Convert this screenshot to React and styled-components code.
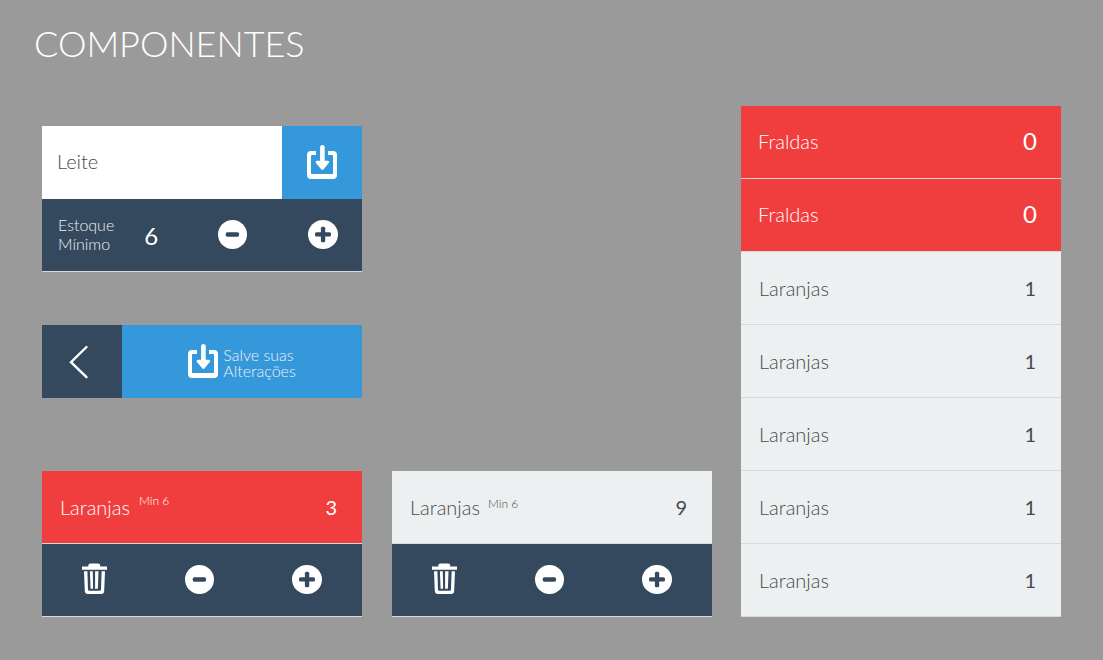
import React, { useState } from "react";
import styled, { createGlobalStyle } from "styled-components";

const color = {
  page: "#9a9a9a",
  navy: "#34495e",
  blue: "#3498db",
  red: "#f03e3e",
  cloud: "#ecf0f1",
  line: "#dcd8d8",
  ink: "#4a4a4a",
};

const GlobalStyle = createGlobalStyle`
  *, *::before, *::after { box-sizing: border-box; }
  body {
    margin: 0;
    background: ${color.page};
    color: ${color.ink};
    font-family: Lato, "Liberation Sans", sans-serif;
  }
`;

const Page = styled.main`
  padding: 21px 42px 43px;
`;

const Title = styled.h1`
  margin: 0 0 41px -8px;
  color: #fff;
  font-size: 36px;
  line-height: 44px;
  font-weight: 300;
`;

const Board = styled.div`
  display: grid;
  grid-template-columns: 67fr 32fr;
  column-gap: 29px;
  align-items: start;
`;

const Samples = styled.div`
  display: grid;
  grid-template-columns: 1fr 1fr;
  column-gap: 30px;
  padding-top: 20px;
`;

const Card = styled.section`
  grid-column: ${(p) => p.$column || 1};
  margin-bottom: ${(p) => p.$space || 0}px;
`;

const EditRow = styled.div`
  display: flex;
  height: 73px;
`;

const NameInput = styled.input`
  flex: 1;
  min-width: 0;
  border: 0;
  border-radius: 0;
  padding: 0 15px 4px;
  background: #fff;
  color: ${color.ink};
  font: 300 20px/24px Lato, "Liberation Sans", sans-serif;
`;

const BarButton = styled.button`
  display: flex;
  align-items: center;
  justify-content: center;
  gap: 5px;
  flex: 0 0 ${(p) => (p.$wide ? 75 : 25)}%;
  border: 0;
  padding: 0 0 2px;
  background: ${(p) => p.$fill};
  color: #fff;
  cursor: pointer;
  font: 300 16px/16px Lato, "Liberation Sans", sans-serif;
  text-align: left;
`;

const BackButton = styled(BarButton)`
  padding: 0 6px 0 0;
`;

const SaveText = styled.span`
  padding-top: 4px;
  color: ${color.cloud};
`;

const ControlRow = styled.div`
  display: flex;
  align-items: center;
  justify-content: space-between;
  height: 73px;
  padding: ${(p) => (p.$labelled ? "0 24px 2px 16px" : "0 40px 2px")};
  border-bottom: 1px solid ${color.line};
  background: ${color.navy};
`;

const MinLabel = styled.span`
  color: ${color.cloud};
  font-size: 16px;
  line-height: 19px;
  font-weight: 300;
`;

const MinValue = styled.output`
  margin: 4px 60px 0 30px;
  color: #fff;
  font-size: 24px;
  line-height: 28px;
`;

const Stepper = styled.div`
  display: flex;
  flex: 1;
  justify-content: space-between;
`;

const IconButton = styled.button`
  display: block;
  border: 0;
  padding: 0;
  background: none;
  color: #fff;
  cursor: pointer;
`;

const Icon = styled.svg`
  display: block;
  flex: none;
  fill: currentColor;
`;

const List = styled.ul`
  margin: 0;
  padding: 0;
  list-style: none;
`;

const ItemRow = styled.div`
  display: flex;
  align-items: center;
  height: 73px;
  padding: ${(p) => (p.$large ? "0 24px 2px 17px" : "0 25px 0 18px")};
  border-bottom: 1px solid ${color.line};
  background: ${(p) => (p.$alert ? color.red : color.cloud)};
  color: ${(p) => (p.$alert ? "#fff" : color.ink)};
`;

const ItemName = styled.span`
  font-size: 20px;
  line-height: 24px;
  font-weight: 300;
`;

const ItemMin = styled.span`
  align-self: flex-start;
  margin-left: ${(p) => (p.$alert ? 9 : 8)}px;
  padding-top: ${(p) => (p.$alert ? 22 : 25)}px;
  font-size: 12px;
  line-height: 16px;
  font-weight: 300;
`;

const Amount = styled.span`
  margin-left: auto;
  font-size: ${(p) => (p.$large ? 24 : 20)}px;
  line-height: 28px;
`;

function SaveIcon() {
  return (
    <Icon width="30" height="34" viewBox="0 0 30 34" aria-hidden="true">
      <path d="M4 6H9V10H5a1 1 0 0 0-1 1V28.5a.6.6 0 0 0 .6.6H25.4a.6.6 0 0 0 .6-.6V11a1 1 0 0 0-1-1H21V6H26a4 4 0 0 1 4 4V30a4 4 0 0 1-4 4H4a4 4 0 0 1-4-4V10a4 4 0 0 1 4-4Z" />
      <rect x="13.1" y="0" width="4.6" height="19" rx="2.3" />
      <path d="M10.1 15.7h10.6c1.4 0 1.9 1.4 1 2.4l-5.1 6.2c-.6.9-1.8.9-2.4 0L9 18.1c-.8-1-.3-2.4 1.1-2.4Z" />
    </Icon>
  );
}

function MinusIcon() {
  return (
    <Icon width="29" height="29" viewBox="0 0 29 29" aria-hidden="true">
      <circle cx="14.5" cy="14.5" r="14.5" />
      <rect x="7.7" y="12.3" width="13.4" height="4.5" rx="1.7" fill={color.navy} />
    </Icon>
  );
}

function PlusIcon() {
  return (
    <Icon width="30" height="29" viewBox="0 0 30 29" aria-hidden="true">
      <ellipse cx="15" cy="14.5" rx="15" ry="14.5" />
      <rect x="7" y="12.3" width="16" height="4.3" rx="1.5" fill={color.navy} />
      <rect x="12.9" y="6.8" width="4.3" height="15.4" rx="1.5" fill={color.navy} />
    </Icon>
  );
}

function TrashIcon() {
  return (
    <Icon width="25" height="32" viewBox="0 0 25 32" aria-hidden="true">
      <path d="M0 3.6h6.3V2.4Q6.3.4 8.3.4h7.9q2 0 2 2v1.2H25v3.1H0Z" />
      <path d="M2 8.2H5.4L6 26.6q.1 1.2 1.2 1.2H17.8q1.1 0 1.2-1.2L19.6 8.2H23L22.2 28q-.2 3-3 3H5.8q-2.8 0-3-3Z" />
      <path d="M7.9 8.2h2.9l.3 17.6H8.6ZM13.1 8.2h3.4l-.6 17.6h-2.8Z" />
    </Icon>
  );
}

function BackIcon() {
  return (
    <Icon width="20" height="34" viewBox="0 0 20 34" aria-hidden="true">
      <path
        d="M17.5 2 2 17.2 17.5 32.2"
        fill="none"
        stroke="currentColor"
        strokeWidth="2.4"
        strokeLinecap="round"
      />
    </Icon>
  );
}

function Item({ name, min, amount, alert, large }) {
  return (
    <ItemRow $alert={alert} $large={large}>
      <ItemName>{name}</ItemName>
      {min && <ItemMin $alert={alert}>Min {min}</ItemMin>}
      <Amount $large={large}>{amount}</Amount>
    </ItemRow>
  );
}

function StockCard({ column, start, alert }) {
  const [amount, setAmount] = useState(start);
  return (
    <Card $column={column}>
      <Item name="Laranjas" min={6} amount={amount} alert={alert} />
      <ControlRow>
        <IconButton type="button" aria-label="Excluir">
          <TrashIcon />
        </IconButton>
        <IconButton
          type="button"
          aria-label="Diminuir"
          onClick={() => setAmount(Math.max(0, amount - 1))}
        >
          <MinusIcon />
        </IconButton>
        <IconButton type="button" aria-label="Aumentar" onClick={() => setAmount(amount + 1)}>
          <PlusIcon />
        </IconButton>
      </ControlRow>
    </Card>
  );
}

function EditorCard() {
  const [name, setName] = useState("Leite");
  const [min, setMin] = useState(6);
  return (
    <Card $space={53}>
      <EditRow>
        <NameInput
          type="text"
          aria-label="Produto"
          value={name}
          onChange={(e) => setName(e.target.value)}
        />
        <BarButton type="button" aria-label="Salvar" $fill={color.blue}>
          <SaveIcon />
        </BarButton>
      </EditRow>
      <ControlRow $labelled>
        <MinLabel id="min-label">
          Estoque
          <br />
          Mínimo
        </MinLabel>
        <MinValue aria-labelledby="min-label">{min}</MinValue>
        <Stepper>
          <IconButton
            type="button"
            aria-label="Diminuir mínimo"
            onClick={() => setMin(Math.max(0, min - 1))}
          >
            <MinusIcon />
          </IconButton>
          <IconButton type="button" aria-label="Aumentar mínimo" onClick={() => setMin(min + 1)}>
            <PlusIcon />
          </IconButton>
        </Stepper>
      </ControlRow>
    </Card>
  );
}

const items = [
  { name: "Fraldas", amount: 0, alert: true, large: true },
  { name: "Fraldas", amount: 0, alert: true, large: true },
  { name: "Laranjas", amount: 1 },
  { name: "Laranjas", amount: 1 },
  { name: "Laranjas", amount: 1 },
  { name: "Laranjas", amount: 1 },
  { name: "Laranjas", amount: 1 },
];

export default function App() {
  return (
    <>
      <GlobalStyle />
      <Page>
        <Title>COMPONENTES</Title>
        <Board>
          <Samples>
            <EditorCard />
            <Card $space={73}>
              <EditRow>
                <BackButton type="button" aria-label="Voltar" $fill={color.navy}>
                  <BackIcon />
                </BackButton>
                <BarButton type="button" $wide $fill={color.blue}>
                  <SaveIcon />
                  <SaveText>
                    Salve suas
                    <br />
                    Alterações
                  </SaveText>
                </BarButton>
              </EditRow>
            </Card>
            <StockCard column={1} start={3} alert />
            <StockCard column={2} start={9} />
          </Samples>
          <List>
            {items.map((item, i) => (
              <li key={i}>
                <Item {...item} />
              </li>
            ))}
          </List>
        </Board>
      </Page>
    </>
  );
}
